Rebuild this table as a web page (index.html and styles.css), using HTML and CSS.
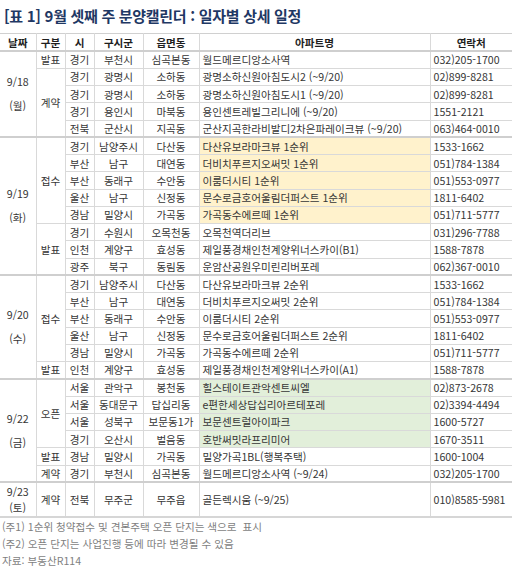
FILE: index.html
```html
<!DOCTYPE html>
<html lang="ko">
<head>
<meta charset="utf-8">
<link rel="stylesheet" href="styles.css">
</head>
<body>
<h1 class="title">[표 1] 9월 셋째 주 분양캘린더 : 일자별 상세 일정</h1>
<table class="cal">
<colgroup>
<col class="c-date"><col class="c-type"><col class="c-si"><col class="c-gu"><col class="c-dong"><col class="c-apt"><col class="c-tel">
</colgroup>
<thead>
<tr><th>날짜</th><th>구분</th><th>시</th><th>구시군</th><th>읍면동</th><th>아파트명</th><th>연락처</th></tr>
</thead>
<tbody class="grp">
<tr><td rowspan="5" class="date">9/18<br>(월)</td><td>발표</td><td>경기</td><td>부천시</td><td>심곡본동</td><td class="apt">월드메르디앙소사역</td><td class="tel">032)205-1700</td></tr>
<tr><td rowspan="4">계약</td><td>경기</td><td>광명시</td><td>소하동</td><td class="apt">광명소하신원아침도시2 (~9/20)</td><td class="tel">02)899-8281</td></tr>
<tr><td>경기</td><td>광명시</td><td>소하동</td><td class="apt">광명소하신원아침도시1 (~9/20)</td><td class="tel">02)899-8281</td></tr>
<tr><td>경기</td><td>용인시</td><td>마북동</td><td class="apt">용인센트레빌그리니에 (~9/20)</td><td class="tel">1551-2121</td></tr>
<tr><td>전북</td><td>군산시</td><td>지곡동</td><td class="apt">군산지곡한라비발디2차은파레이크뷰 (~9/20)</td><td class="tel">063)464-0010</td></tr>
</tbody>
<tbody class="grp">
<tr><td rowspan="8" class="date">9/19<br>(화)</td><td rowspan="5">접수</td><td>경기</td><td>남양주시</td><td>다산동</td><td class="apt hl-y">다산유보라마크뷰 1순위</td><td class="tel">1533-1662</td></tr>
<tr><td>부산</td><td>남구</td><td>대연동</td><td class="apt hl-y">더비치푸르지오써밋 1순위</td><td class="tel">051)784-1384</td></tr>
<tr><td>부산</td><td>동래구</td><td>수안동</td><td class="apt hl-y">이룸더시티 1순위</td><td class="tel">051)553-0977</td></tr>
<tr><td>울산</td><td>남구</td><td>신정동</td><td class="apt hl-y">문수로금호어울림더퍼스트 1순위</td><td class="tel">1811-6402</td></tr>
<tr><td>경남</td><td>밀양시</td><td>가곡동</td><td class="apt hl-y">가곡동수에르떼 1순위</td><td class="tel">051)711-5777</td></tr>
<tr><td rowspan="3">발표</td><td>경기</td><td>수원시</td><td>오목천동</td><td class="apt">오목천역더리브</td><td class="tel">031)296-7788</td></tr>
<tr><td>인천</td><td>계양구</td><td>효성동</td><td class="apt">제일풍경채인천계양위너스카이(B1)</td><td class="tel">1588-7878</td></tr>
<tr><td>광주</td><td>북구</td><td>동림동</td><td class="apt">운암산공원우미린리버포레</td><td class="tel">062)367-0010</td></tr>
</tbody>
<tbody class="grp">
<tr><td rowspan="6" class="date">9/20<br>(수)</td><td rowspan="5">접수</td><td>경기</td><td>남양주시</td><td>다산동</td><td class="apt">다산유보라마크뷰 2순위</td><td class="tel">1533-1662</td></tr>
<tr><td>부산</td><td>남구</td><td>대연동</td><td class="apt">더비치푸르지오써밋 2순위</td><td class="tel">051)784-1384</td></tr>
<tr><td>부산</td><td>동래구</td><td>수안동</td><td class="apt">이룸더시티 2순위</td><td class="tel">051)553-0977</td></tr>
<tr><td>울산</td><td>남구</td><td>신정동</td><td class="apt">문수로금호어울림더퍼스트 2순위</td><td class="tel">1811-6402</td></tr>
<tr><td>경남</td><td>밀양시</td><td>가곡동</td><td class="apt">가곡동수에르떼 2순위</td><td class="tel">051)711-5777</td></tr>
<tr><td>발표</td><td>인천</td><td>계양구</td><td>효성동</td><td class="apt">제일풍경채인천계양위너스카이(A1)</td><td class="tel">1588-7878</td></tr>
</tbody>
<tbody class="grp">
<tr><td rowspan="6" class="date">9/22<br>(금)</td><td rowspan="4">오픈</td><td>서울</td><td>관악구</td><td>봉천동</td><td class="apt hl-g">힐스테이트관악센트씨엘</td><td class="tel">02)873-2678</td></tr>
<tr><td>서울</td><td>동대문구</td><td>답십리동</td><td class="apt hl-g">e편한세상답십리아르테포레</td><td class="tel">02)3394-4494</td></tr>
<tr><td>서울</td><td>성북구</td><td>보문동1가</td><td class="apt hl-g">보문센트럴아이파크</td><td class="tel">1600-5727</td></tr>
<tr><td>경기</td><td>오산시</td><td>벌음동</td><td class="apt hl-g">호반써밋라프리미어</td><td class="tel">1670-3511</td></tr>
<tr><td>발표</td><td>경남</td><td>밀양시</td><td>가곡동</td><td class="apt">밀양가곡1BL(행복주택)</td><td class="tel">1600-1004</td></tr>
<tr><td>계약</td><td>경기</td><td>부천시</td><td>심곡본동</td><td class="apt">월드메르디앙소사역 (~9/24)</td><td class="tel">032)205-1700</td></tr>
</tbody>
<tbody class="grp">
<tr class="tall"><td class="date">9/23<br>(토)</td><td>계약</td><td>전북</td><td>무주군</td><td>무주읍</td><td class="apt">골든렉시움 (~9/25)</td><td class="tel">010)8585-5981</td></tr>
</tbody>
</table>
<div class="notes">
<p>(주1) 1순위 청약접수 및 견본주택 오픈 단지는 색으로&nbsp; 표시</p>
<p>(주2) 오픈 단지는 사업진행 등에 따라 변경될 수 있음</p>
<p>자료: 부동산R114</p>
</div>
</body>
</html>
```
FILE: styles.css
```css
html, body {
  margin: 0;
  padding: 0;
  background: #ffffff;
}
body {
  width: 512px;
  font-family: "Noto Sans CJK KR", "Noto Sans", sans-serif;
  color: #363636;
}
.title {
  margin: 0;
  padding: 6px 0 0 4px;
  height: 27px;
  box-sizing: border-box;
  font-size: 15px;
  line-height: 20px;
  font-weight: bold;
  color: #1f3864;
  letter-spacing: -0.3px;
}
.cal {
  border-collapse: collapse;
  table-layout: fixed;
  width: 512px;
  margin-top: 6px;
  font-size: 10.6px;
}
.c-date { width: 36px; }
.c-type { width: 29px; }
.c-si { width: 29px; }
.c-gu { width: 49px; }
.c-dong { width: 56px; }
.c-apt { width: 231px; }
.c-tel { width: 82px; }
.cal tr { height: 17.25px; }
.cal th, .cal td {
  border: 1px solid #d9d9d9;
  padding: 0;
  line-height: 13px;
  text-align: center;
  white-space: nowrap;
  overflow: hidden;
  font-weight: normal;
}
.cal thead tr { height: 17.5px; }
.cal th {
  font-weight: bold;
  color: #1e1e1e;
  border-top: 1px solid #d0d0d0;
  border-bottom: 2px solid #cfcfcf;
}
.cal th:first-child, .cal td:first-child { border-left: none; }
.cal th:last-child, .cal td:last-child { border-right: none; }
.cal tbody.grp { border-top: 2px solid #cfcfcf; }
.cal thead + tbody.grp { border-top: none; }
.cal tbody.grp:last-child { border-bottom: 2px solid #d6d6d6; }
.cal td.date { line-height: 24px; }
.cal td.apt {
  text-align: left;
  padding-left: 3px;
}
.cal td.tel {
  text-align: left;
  padding-left: 3px;
}
.cal tr.tall { height: 34.5px; }
.cal tr.tall td.date { line-height: 16px; }
.hl-y { background: #fff2cc; }
.hl-g { background: #e2efda; }
.notes {
  padding: 0 0 0 2px;
  font-size: 10.6px;
  color: #7f7f7f;
}
.notes p {
  margin: 0;
  line-height: 17px;
}
```
